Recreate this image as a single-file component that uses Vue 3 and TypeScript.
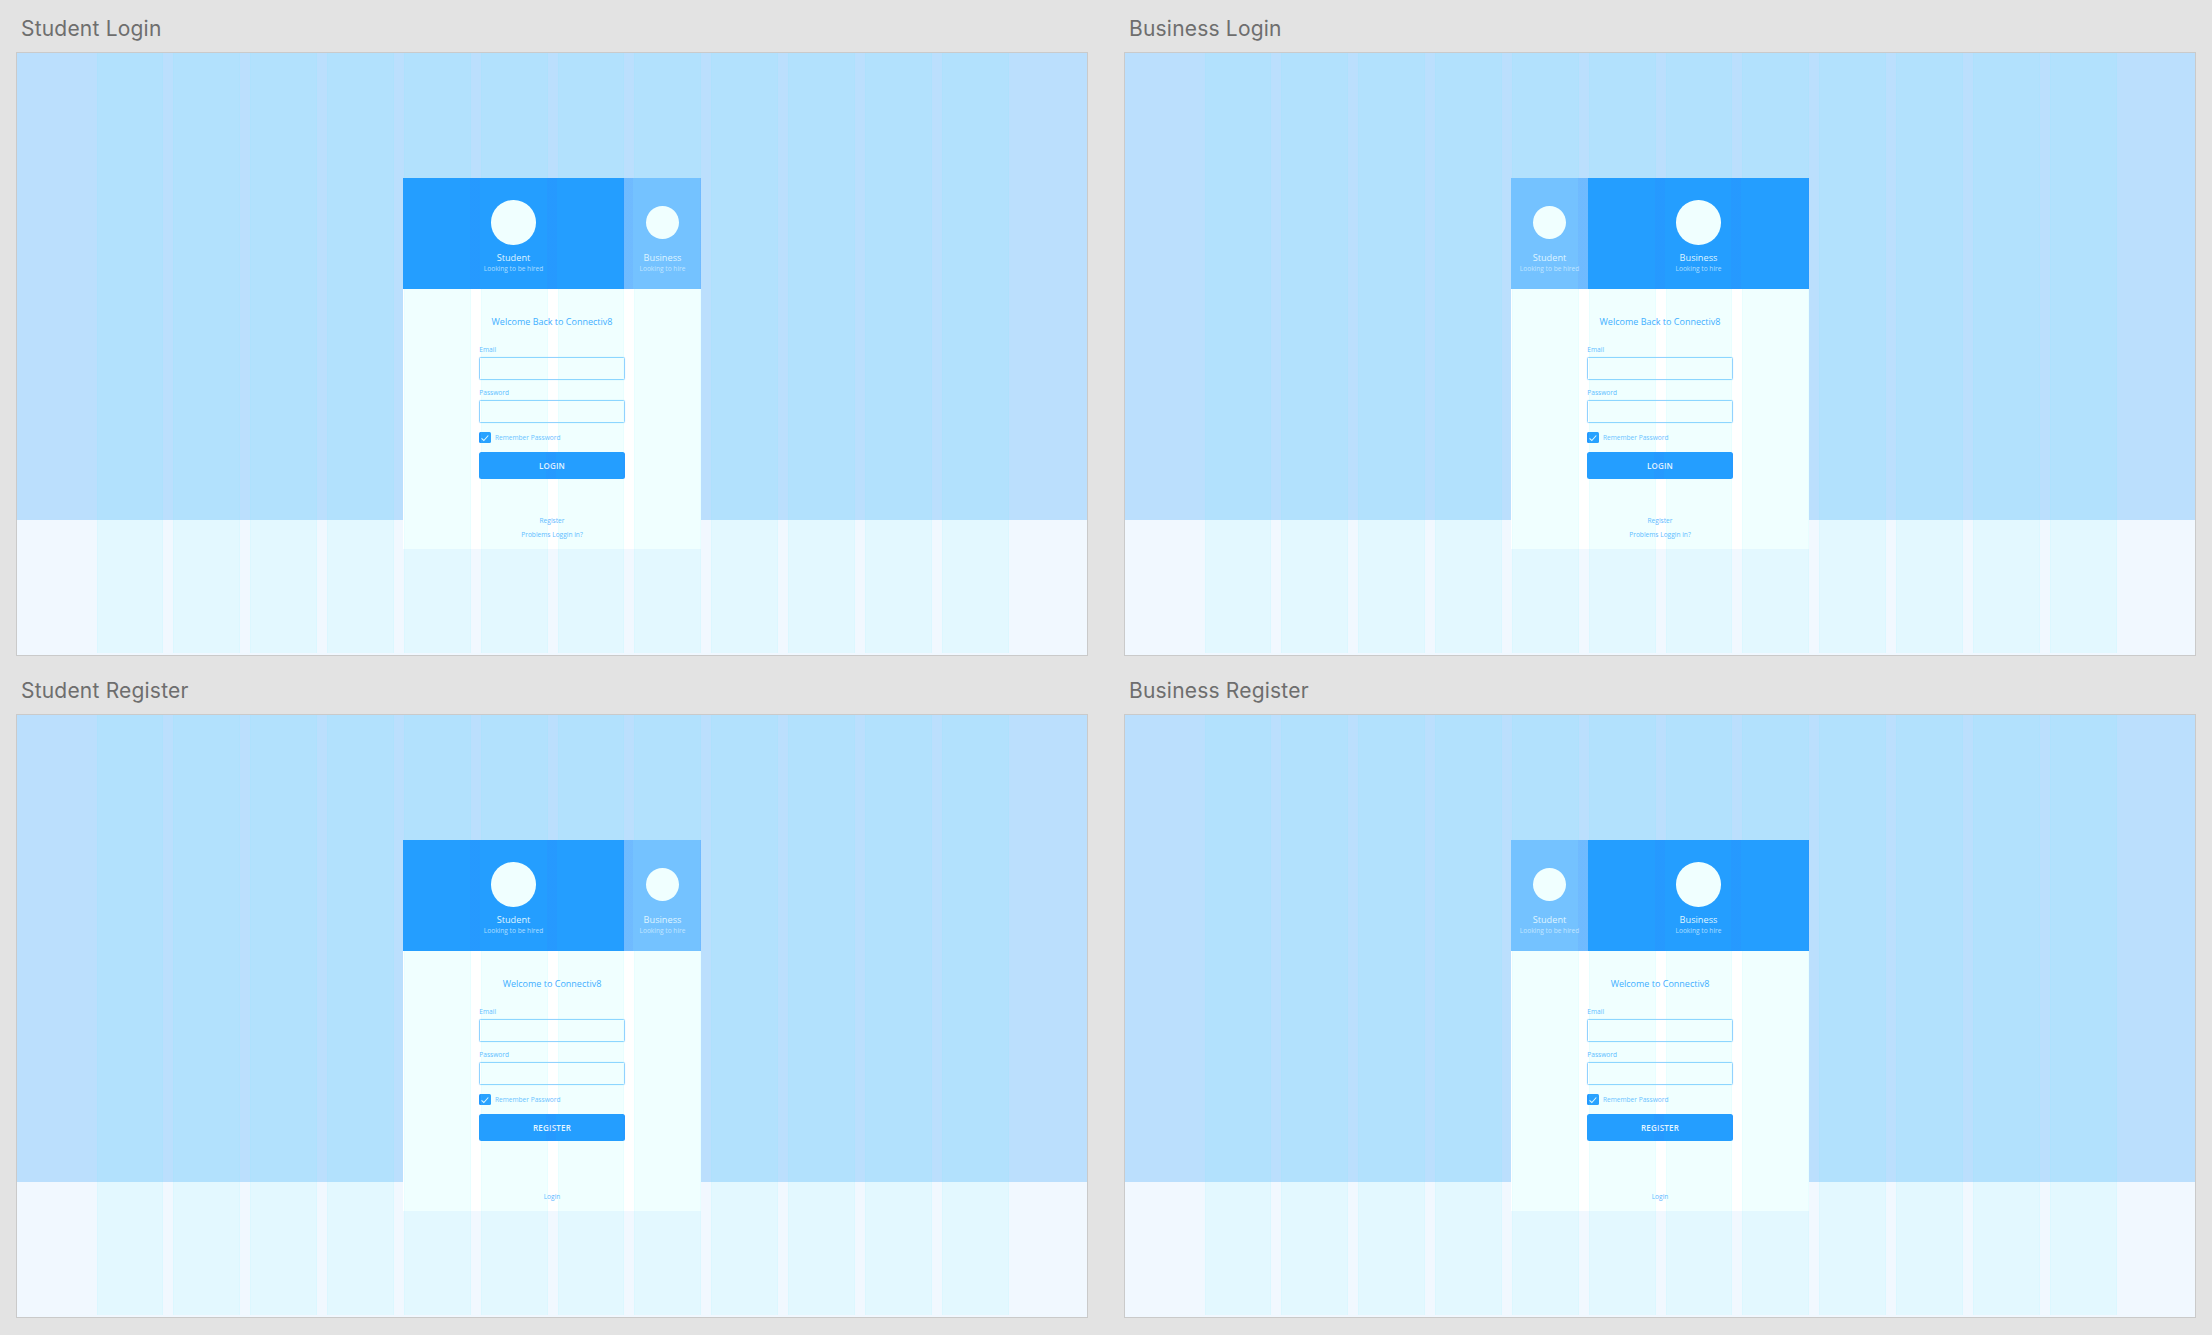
<script setup lang="ts">
interface Screen {
  title: string
  active: 'student' | 'business'
  welcome: string
  action: string
  links: string[]
}

const screens: Screen[] = [
  { title: 'Student Login', active: 'student', welcome: 'Welcome Back to Connectiv8', action: 'LOGIN', links: ['Register', 'Problems Loggin in?'] },
  { title: 'Business Login', active: 'business', welcome: 'Welcome Back to Connectiv8', action: 'LOGIN', links: ['Register', 'Problems Loggin in?'] },
  { title: 'Student Register', active: 'student', welcome: 'Welcome to Connectiv8', action: 'REGISTER', links: ['Login'] },
  { title: 'Business Register', active: 'business', welcome: 'Welcome to Connectiv8', action: 'REGISTER', links: ['Login'] }
]

const tabs = [
  { id: 'student', name: 'Student', sub: 'Looking to be hired' },
  { id: 'business', name: 'Business', sub: 'Looking to hire' }
]
</script>

<template>
  <div class="board">
    <section v-for="screen in screens" :key="screen.title" class="screen">
      <div class="screen-title">{{ screen.title }}</div>
      <div class="artboard">
        <div class="hero"></div>
        <div class="lower"></div>

        <div class="card">
          <div class="tabs">
            <div
              v-for="tab in tabs"
              :key="tab.id"
              class="tab"
              :class="{ 'tab-active': tab.id === screen.active }"
            >
              <div class="avatar-slot"><div class="avatar"></div></div>
              <div class="tab-name">{{ tab.name }}</div>
              <div class="tab-sub">{{ tab.sub }}</div>
            </div>
          </div>
          <div class="card-body">
            <div class="welcome">{{ screen.welcome }}</div>
            <form class="form">
              <label class="field-label field-first">Email</label>
              <input class="field-input" type="text" />
              <label class="field-label">Password</label>
              <input class="field-input" type="password" />
              <div class="remember">
                <span class="checkbox">
                  <svg viewBox="0 0 12 12" width="12" height="12">
                    <path d="M2.6 6.4 L5 8.6 L9.6 3.4" fill="none" stroke="#e8f8ff" stroke-width="1.1" />
                  </svg>
                </span>
                <span>Remember Password</span>
              </div>
              <div class="submit">{{ screen.action }}</div>
            </form>
            <div class="links">
              <span v-for="link in screen.links" :key="link">{{ link }}</span>
            </div>
          </div>
        </div>

        <!-- Layout grid sits over everything, like the design tool's overlay -->
        <div class="grid-overlay">
          <div v-for="n in 12" :key="n" class="grid-col"></div>
        </div>
      </div>
    </section>
  </div>
</template>

<style>
html,
body {
  background: #e3e3e3;
}
</style>

<style scoped>
.board {
  display: grid;
  grid-template-columns: 1072px 1072px;
  column-gap: 36px;
  padding: 0 16px;
  width: 2212px;
  height: 1335px;
  box-sizing: border-box;
  background: #e3e3e3;
  overflow: hidden;
  align-content: start;
}

.screen-title {
  height: 58px;
  box-sizing: border-box;
  padding: 0 0 10px 5px;
  display: flex;
  align-items: flex-end;
  font-family: Inter, "Noto Sans", sans-serif;
  font-size: 21px;
  line-height: 26px;
  letter-spacing: 0.2px;
  color: #6e6e6e;
}

.screen:nth-child(-n + 2) .screen-title {
  height: 52px;
}

.artboard {
  position: relative;
  height: 604px;
  border: 1px solid #cacaca;
  box-sizing: border-box;
  display: flex;
  flex-direction: column;
  background: #f1f8ff;
  font-family: "Open Sans", sans-serif;
}

.hero {
  height: 467px;
  background: #bbdffd;
}

.lower {
  flex: 1;
}

.card {
  position: absolute;
  left: 386px;
  top: 125px;
  width: 298px;
  height: 370.5px;
  display: flex;
  flex-direction: column;
  background: #fff;
}

/* Header and button stay above the grid: the overlay barely shows on the strong blue */
.tabs {
  position: relative;
  z-index: 1;
  display: flex;
  height: 111px;
  flex: none;
}

.tabs::after,
.submit::after {
  content: "";
  position: absolute;
  inset: 0;
  background: repeating-linear-gradient(
    90deg,
    transparent 0,
    transparent 66.8px,
    rgba(60, 100, 255, 0.08) 66.8px,
    rgba(60, 100, 255, 0.08) 76.8px
  );
  pointer-events: none;
}

.tab {
  width: 77px;
  flex: none;
  display: flex;
  flex-direction: column;
  align-items: center;
  padding-top: 22.3px;
  box-sizing: border-box;
  background: #74c2ff;
  color: #dff4ff;
  white-space: nowrap;
}

.tab-active {
  width: auto;
  flex: 1;
  background: #249eff;
  color: #dff4ff;
}

.avatar-slot {
  height: 44.7px;
  display: flex;
  align-items: center;
}

.avatar {
  width: 33.5px;
  height: 33.5px;
  border-radius: 50%;
  background: #f0ffff;
}

.tab-active .avatar {
  width: 44.7px;
  height: 44.7px;
}

.tab-name {
  margin-top: 7px;
  font-size: 9.2px;
  line-height: 12px;
}

.tab-sub {
  font-size: 6.6px;
  line-height: 9px;
  opacity: 0.72;
}

.card-body {
  flex: 1;
  display: flex;
  flex-direction: column;
  padding-top: 26px;
  min-height: 0;
}

.welcome {
  font-size: 9px;
  line-height: 14px;
  text-align: center;
  color: #3ea8ff;
}

.form {
  width: 145.4px;
  margin-left: 76.3px;
  display: flex;
  flex-direction: column;
}

.field-label {
  margin-top: 9.3px;
  margin-bottom: 3.2px;
  font-size: 6.6px;
  line-height: 8px;
  color: #62b7ff;
}

.field-first {
  margin-top: 17.3px;
}

.field-input {
  height: 22.4px;
  width: 100%;
  margin: 0;
  padding: 0;
  box-sizing: border-box;
  border: 1px solid #92d2ff;
  border-radius: 1.5px;
  box-shadow: 0 0 1px #a5daff;
  background: transparent;
  outline: none;
}

.remember {
  margin-top: 9px;
  display: flex;
  align-items: center;
  gap: 4px;
  font-size: 6.6px;
  line-height: 11.6px;
  color: #6dbdff;
}

.checkbox {
  width: 11.6px;
  height: 11.6px;
  flex: none;
  display: flex;
  align-items: center;
  justify-content: center;
  background: #2499ff;
  border-radius: 1.5px;
}

.submit {
  position: relative;
  z-index: 1;
  margin-top: 9px;
  height: 27px;
  display: flex;
  align-items: center;
  justify-content: center;
  overflow: hidden;
  border-radius: 2.5px;
  background: #249eff;
  color: #e6f7ff;
  font-size: 8px;
  font-weight: 600;
  letter-spacing: 0.2px;
}

.links {
  margin-top: auto;
  padding-bottom: 9.5px;
  display: flex;
  flex-direction: column;
  align-items: center;
  gap: 6px;
  font-size: 6.6px;
  line-height: 8px;
  color: #62b7ff;
}

.grid-overlay {
  position: absolute;
  top: 0;
  left: 79.5px;
  right: 78.5px;
  bottom: 2px;
  display: grid;
  grid-template-columns: repeat(12, 1fr);
  column-gap: 10px;
  pointer-events: none;
}

.grid-col {
  background: rgba(90, 255, 255, 0.09);
  box-shadow: inset 1px 0 0 rgba(120, 240, 255, 0.06), inset -1px 0 0 rgba(120, 240, 255, 0.06);
}
</style>
